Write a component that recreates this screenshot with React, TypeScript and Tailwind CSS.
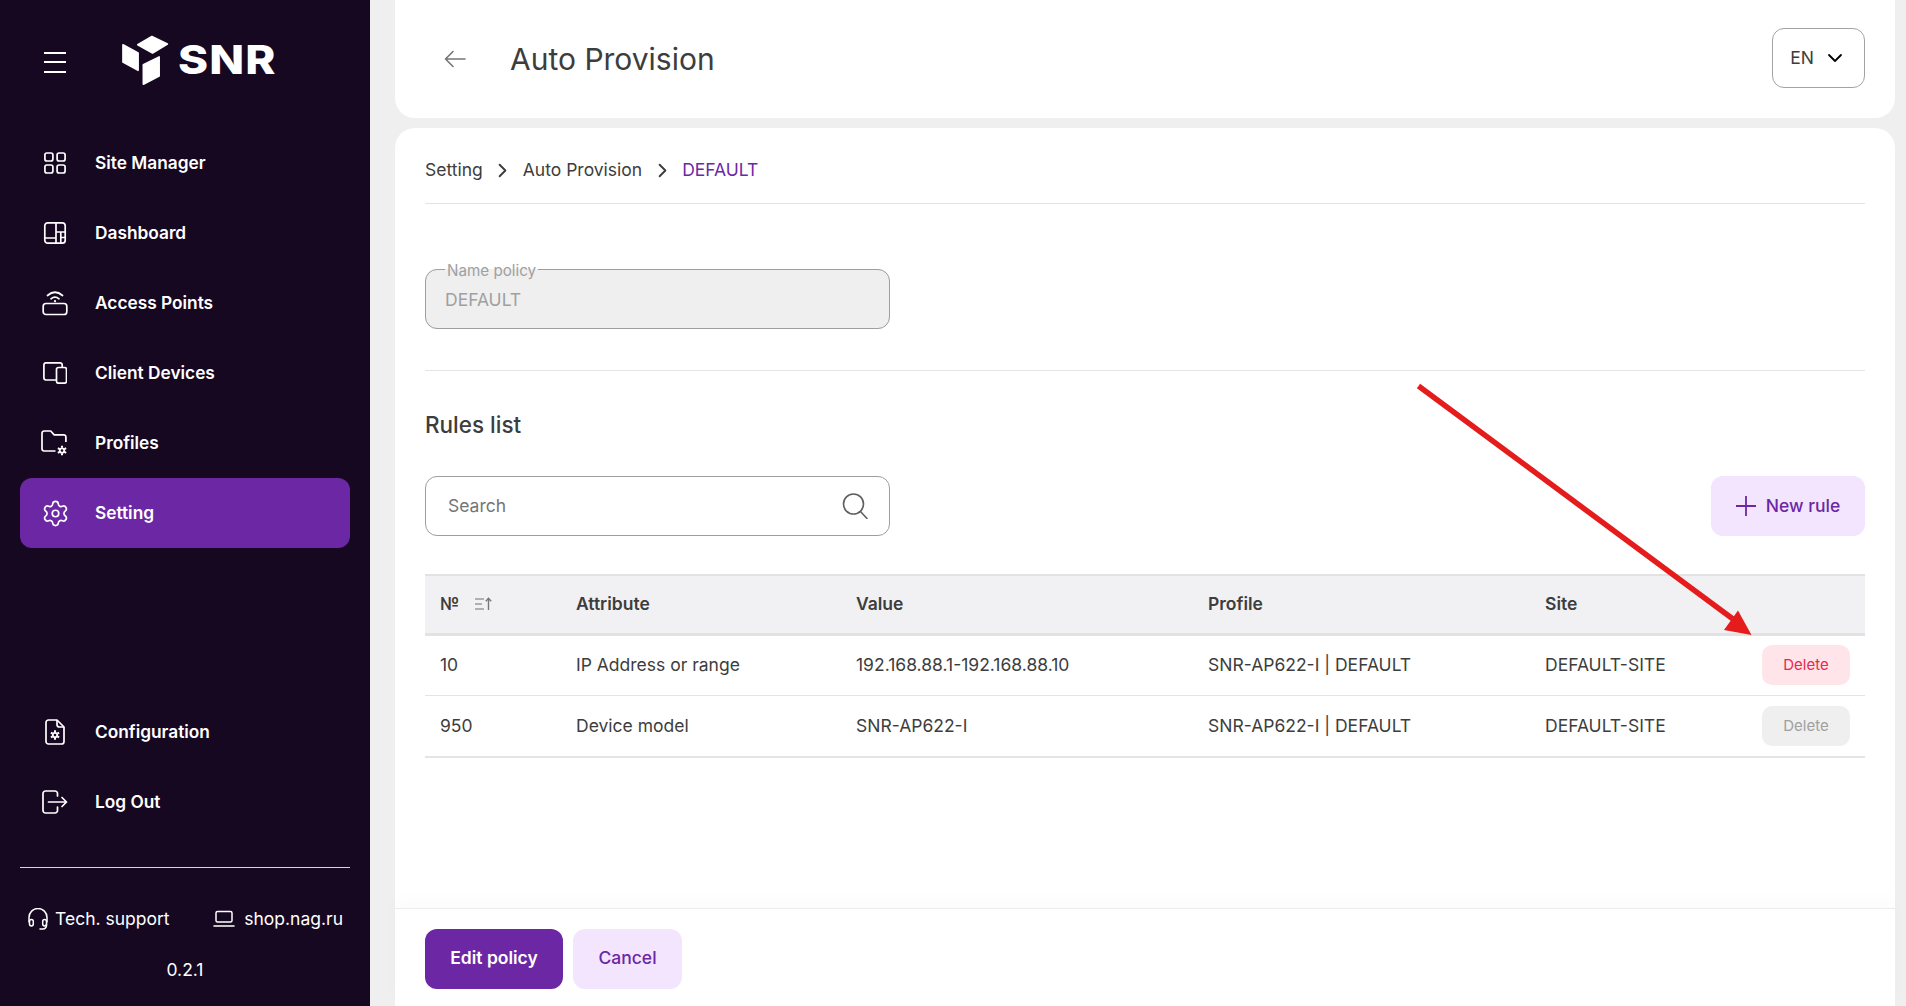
import { ChevronDown, ChevronRight } from 'lucide-react';
import type { ReactNode } from 'react';

const SiteManagerIcon = () => (
  <svg width="24" height="24" viewBox="0 0 24 24" fill="none" stroke="white" strokeWidth="1.7">
    <rect x="1.9" y="2" width="8" height="8" rx="2" />
    <rect x="14.1" y="2" width="8" height="8" rx="2" />
    <rect x="1.9" y="14" width="8" height="8" rx="2" />
    <rect x="14.1" y="14" width="8" height="8" rx="2" />
  </svg>
);

const DashboardIcon = () => (
  <svg width="24" height="24" viewBox="0 0 24 24" fill="none" stroke="white" strokeWidth="1.7" strokeLinejoin="round">
    <rect x="1.8" y="1.8" width="20.4" height="20.4" rx="3" />
    <path d="M13 2v20M2 17h11M13 11h9M17.8 11v11M17.8 16.5h4.4" />
  </svg>
);

const AccessPointIcon = () => (
  <svg width="26" height="26" viewBox="0 0 26 26" fill="none" stroke="white" strokeWidth="1.7" strokeLinecap="round">
    <rect x="1.2" y="13.5" width="23.6" height="11" rx="2.8" />
    <path d="M5.5 5.5Q13-1 20.5 5.5M9 8.8Q13 5.6 17 8.8" />
    <path d="M13 11v.2" strokeWidth="2.2" />
  </svg>
);

const ClientDevicesIcon = () => (
  <svg width="24" height="22" viewBox="0 0 24 22" fill="none" stroke="white" strokeWidth="1.7" strokeLinejoin="round">
    <path d="M13.5 18H3A2.2 2.2 0 0 1 .9 15.8V3A2.2 2.2 0 0 1 3 .9h14A2.2 2.2 0 0 1 19.2 3v2.5" />
    <rect x="13.5" y="5.5" width="10" height="15.7" rx="2" />
  </svg>
);

const SmallGear = ({ x, y }: { x: number; y: number }) => (
  <g transform={`translate(${x} ${y})`} fill="none" stroke="white">
    <circle r="2.2" strokeWidth="1.8" />
    <path d="M0-4.7v2M0 2.7v2M-4.1-2.35l1.7 1M2.4 1.35l1.7 1M-4.1 2.35l1.7-1M2.4-1.35l1.7-1" strokeWidth="2" />
  </g>
);

const ProfilesIcon = () => (
  <svg width="28" height="26" viewBox="0 0 28 26" fill="none" stroke="white" strokeWidth="1.7" strokeLinejoin="round">
    <path d="M14.5 21H3.2A2.2 2.2 0 0 1 1 18.8V3.2A2.2 2.2 0 0 1 3.2 1h6.5l3.5 3.8h9.5a2.2 2.2 0 0 1 2.2 2.2v5" />
    <SmallGear x={21} y={20.5} />
  </svg>
);

const ConfigurationIcon = () => (
  <svg width="20" height="26" viewBox="0 0 20 26" fill="none" stroke="white" strokeWidth="1.7" strokeLinejoin="round">
    <path d="M3.5 1H12l7 7v14.5a2.5 2.5 0 0 1-2.5 2.5h-13A2.5 2.5 0 0 1 1 22.5v-19A2.5 2.5 0 0 1 3.5 1z" />
    <path d="M12 1v4.5A2.5 2.5 0 0 0 14.5 8H19" />
    <SmallGear x={10} y={16} />
  </svg>
);

const LogOutIcon = () => (
  <svg width="26" height="24" viewBox="0 0 26 24" fill="none" stroke="white" strokeWidth="1.7" strokeLinecap="round" strokeLinejoin="round">
    <path d="M15.5 6V3.5A2.5 2.5 0 0 0 13 1H3.5A2.5 2.5 0 0 0 1 3.5v17A2.5 2.5 0 0 0 3.5 23H13a2.5 2.5 0 0 0 2.5-2.5V17" />
    <path d="M6.5 12h18M20 7.5l4.5 4.5-4.5 4.5" />
  </svg>
);

const HeadsetIcon = () => (
  <svg width="20" height="22" viewBox="0 0 20 22" fill="none" stroke="white" strokeWidth="1.5" strokeLinecap="round">
    <path d="M1 14V9.5a9 9 0 0 1 18 0V14" />
    <rect x="1.5" y="11.5" width="3.8" height="6.5" rx="1.9" />
    <rect x="14.7" y="11.5" width="3.8" height="6.5" rx="1.9" />
    <path d="M18.5 16v1.5a3.5 3.5 0 0 1-3.5 3.5H12" />
  </svg>
);

const LaptopIcon = () => (
  <svg width="22" height="18" viewBox="0 0 22 18" fill="none" stroke="white" strokeWidth="1.5" strokeLinecap="round" strokeLinejoin="round">
    <rect x="3" y="1.5" width="16" height="10.5" rx="1.5" />
    <path d="M1 16h20" />
  </svg>
);

const SettingIcon = () => (
  <svg className="shrink-0" width="29" height="29" viewBox="0 0 24 24" fill="none" stroke="white" strokeWidth="1.4" strokeLinecap="round" strokeLinejoin="round">
    <path d="M9.671 4.136a2.34 2.34 0 0 1 4.659 0 2.34 2.34 0 0 0 3.319 1.915 2.34 2.34 0 0 1 2.33 4.033 2.34 2.34 0 0 0 0 3.831 2.34 2.34 0 0 1-2.33 4.033 2.34 2.34 0 0 0-3.319 1.915 2.34 2.34 0 0 1-4.659 0 2.34 2.34 0 0 0-3.32-1.915 2.34 2.34 0 0 1-2.33-4.033 2.34 2.34 0 0 0 0-3.831A2.34 2.34 0 0 1 6.351 6.051a2.34 2.34 0 0 0 3.32-1.915" />
    <circle cx="12" cy="12" r="2.7" />
  </svg>
);

const SortIcon = () => (
  <svg width="17" height="14" viewBox="0 0 17 14" fill="none" stroke="#9a9a9a" strokeWidth="1.4">
    <path d="M0 2h9M0 7h7M0 12h9" />
    <path d="M13.5 13V1.5M10.8 4.2l2.7-2.9 2.7 2.9" stroke="#777" />
  </svg>
);

const BackIcon = () => (
  <svg width="22" height="18" viewBox="0 0 22 18" fill="none" stroke="#757575" strokeWidth="1.6" strokeLinecap="round" strokeLinejoin="round">
    <path d="M21 9H1.5M9 1.5L1.5 9 9 16.5" />
  </svg>
);

const SearchIcon = () => (
  <svg width="26" height="26" viewBox="0 0 26 26" fill="none" stroke="#5f5f5f" strokeWidth="1.6" strokeLinecap="round">
    <circle cx="11.5" cy="11" r="10" />
    <path d="M18.5 18.5L25 25.5" />
  </svg>
);

const PlusIcon = () => (
  <svg width="20" height="20" viewBox="0 0 20 20" fill="none" stroke="currentColor" strokeWidth="1.8">
    <path d="M10 0v20M0 10h20" />
  </svg>
);

const Logo = () => (
  <div className="-mt-[3px] ml-[55px] flex items-center">
    <svg width="48" height="51" viewBox="64 46 146 154" fill="white" stroke="white" strokeWidth="5" strokeLinejoin="round">
      <polygon points="70,75 116,100 116,153 70,128" />
      <polygon points="132,136 180,112 180,170 132,195" />
      <polygon points="115,75 158,50 205,73 160,100" />
    </svg>
    <span className="-mt-[2px] ml-[9px] origin-left scale-x-[1.14] text-[40px] leading-none font-extrabold tracking-[1px] text-white">
      SNR
    </span>
  </div>
);

function NavItem({ icon, label, active }: { icon: ReactNode; label: string; active?: boolean }) {
  return (
    <div className={`mx-5 flex h-[70px] items-center rounded-[12px] ${active ? 'bg-[#6c27a5]' : ''}`}>
      <div className="flex w-[75px] justify-start pl-[21px]">
        <div className="flex w-[28px] justify-center">{icon}</div>
      </div>
      <span className="text-[17.3px] font-semibold text-white">{label}</span>
    </div>
  );
}

const Sidebar = () => (
  <aside className="flex h-full w-[370px] shrink-0 flex-col bg-[#170822]">
    <div className="flex h-[128px] items-center pb-[4px] pl-[44px]">
      <div className="flex w-[22px] flex-col gap-[7.5px]">
        <div className="h-[2px] bg-white" />
        <div className="h-[2px] bg-white" />
        <div className="h-[2px] bg-white" />
      </div>
      <Logo />
    </div>
    <nav>
      <NavItem icon={<SiteManagerIcon />} label="Site Manager" />
      <NavItem icon={<DashboardIcon />} label="Dashboard" />
      <NavItem icon={<AccessPointIcon />} label="Access Points" />
      <NavItem icon={<ClientDevicesIcon />} label="Client Devices" />
      <NavItem icon={<ProfilesIcon />} label="Profiles" />
      <NavItem icon={<SettingIcon />} label="Setting" active />
    </nav>
    <div className="mt-auto">
      <NavItem icon={<ConfigurationIcon />} label="Configuration" />
      <NavItem icon={<LogOutIcon />} label="Log Out" />
    </div>
    <div className="mx-5 mt-[30px] border-t border-[#d9d3dd]" />
    <div className="mx-5 mt-[39px] flex items-center justify-between pr-[7px] pl-[8px] text-[17.5px] leading-6 text-white">
      <span className="flex items-center gap-[7px]">
        <HeadsetIcon /> Tech. support
      </span>
      <span className="flex items-center gap-[9px]">
        <LaptopIcon /> shop.nag.ru
      </span>
    </div>
    <div className="mt-[27px] mb-[24.5px] text-center text-[17.5px] leading-6 text-white">0.2.1</div>
  </aside>
);

const Header = () => (
  <header className="flex h-[118px] shrink-0 items-center rounded-b-[20px] bg-white pr-[30px] pl-[49px]">
    <BackIcon />
    <h1 className="ml-[44px] text-[30px] text-[#3d3d3d]">Auto Provision</h1>
    <button className="-mt-[2px] ml-auto flex h-[60px] w-[93px] items-center justify-center gap-[9px] rounded-[12px] border border-[#a3a3a3] text-[17.5px] text-[#3d3d3d]">
      EN <ChevronDown className="h-[24px] w-[24px] text-black" strokeWidth={1.8} />
    </button>
  </header>
);

const Breadcrumb = () => (
  <div className="flex h-[76px] items-center border-b border-[#e4e4e4] pt-[10px] text-[17.5px] text-[#3d3d3d]">
    <span>Setting</span>
    <ChevronRight className="mx-[8.5px] h-[23px] w-[23px]" strokeWidth={2} />
    <span>Auto Provision</span>
    <ChevronRight className="mx-[8.5px] h-[23px] w-[23px]" strokeWidth={2} />
    <span className="text-[#6c27a5]">DEFAULT</span>
  </div>
);

const NamePolicy = () => (
  <fieldset className="mt-[55px] h-[70px] w-[465px] rounded-[12px] border border-[#9e9e9e] bg-[#efefef] px-[19px]">
    <legend className="relative top-[1.5px] px-[2px] text-[15.2px] leading-5 text-[#a0a0a0]">Name policy</legend>
    <div className="pt-[7.5px] text-[17.5px] text-[#a0a0a0]">DEFAULT</div>
  </fieldset>
);

const rows = [
  { no: '10', attribute: 'IP Address or range', value: '192.168.88.1-192.168.88.10', profile: 'SNR-AP622-I | DEFAULT', site: 'DEFAULT-SITE', deletable: true },
  { no: '950', attribute: 'Device model', value: 'SNR-AP622-I', profile: 'SNR-AP622-I | DEFAULT', site: 'DEFAULT-SITE', deletable: false },
];

const RulesTable = () => (
  <table className="mt-[38px] w-full table-fixed border-collapse text-[17.5px] text-[#3d3d3d]">
    <thead>
      <tr className="h-[59px] border-t-2 border-b-[3px] border-[#e2e2e2] bg-[#f1f1f3] text-left">
        <th className="w-[136px] pl-[15px] font-semibold">
          <span className="flex items-center gap-[16px]">
            № <SortIcon />
          </span>
        </th>
        <th className="w-[280px] pl-[15px] font-semibold">Attribute</th>
        <th className="w-[351px] pl-[15px] font-semibold">Value</th>
        <th className="w-[337px] pl-[16px] font-semibold">Profile</th>
        <th className="w-[233px] pl-[16px] font-semibold">Site</th>
        <th />
      </tr>
    </thead>
    <tbody>
      {rows.map((row, i) => (
        <tr key={row.no} className={`h-[61.5px] border-[#e4e4e4] ${i === 1 ? 'border-b-2' : 'border-b'}`}>
          <td className="pl-[15px]">{row.no}</td>
          <td className="pl-[15px]">{row.attribute}</td>
          <td className="pl-[15px]">{row.value}</td>
          <td className="pl-[16px]">{row.profile}</td>
          <td className="pl-[16px]">{row.site}</td>
          <td className="pr-[15px] text-right">
            <button
              className={`h-[40px] w-[88px] rounded-[10px] text-[15px] ${
                row.deletable ? 'bg-[#ffe4e9] text-[#e8274f]' : 'bg-[#efefef] text-[#a0a0a0]'
              }`}
            >
              Delete
            </button>
          </td>
        </tr>
      ))}
    </tbody>
  </table>
);

const RedArrow = () => (
  <svg className="pointer-events-none absolute top-0 left-0" width="1906" height="1006" fill="none">
    <path d="M1418.5 386L1737 622" stroke="#e51c1c" strokeWidth="5.5" />
    <polygon points="1751.5,635 1724,630 1738,610.5" fill="#e51c1c" />
  </svg>
);

export default function App() {
  return (
    <div className="relative flex h-screen w-full overflow-hidden bg-[#efefef] font-['Inter',sans-serif]">
      <Sidebar />
      <main className="flex min-w-0 flex-1 flex-col gap-[10px] pr-[11px] pl-[25px]">
        <Header />
        <section className="flex min-h-0 flex-1 flex-col rounded-t-[20px] bg-white">
          <div className="flex-1 px-[30px]">
            <Breadcrumb />
            <NamePolicy />
            <div className="mt-[41px] border-t border-[#e4e4e4]" />
            <h2 className="mt-[39px] text-[22.5px] leading-[30px] font-medium text-[#3d3d3d]">Rules list</h2>
            <div className="mt-[36px] flex items-center justify-between">
              <div className="flex h-[60px] w-[465px] items-center rounded-[12px] border border-[#9e9e9e] pr-[21px] pl-[22px]">
                <span className="flex-1 text-[17.5px] text-[#757575]">Search</span>
                <SearchIcon />
              </div>
              <button className="flex h-[60px] w-[154px] items-center justify-center gap-[10px] rounded-[12px] bg-[#f2e5fd] text-[17.5px] font-medium text-[#6c27a5]">
                <PlusIcon /> New rule
              </button>
            </div>
            <RulesTable />
          </div>
          <footer className="flex h-[98px] shrink-0 items-center gap-[10px] border-t border-[#ececec] px-[30px] pt-[2px] shadow-[0_-8px_16px_rgba(0,0,0,0.02)]">
            <button className="h-[60px] w-[138px] rounded-[12px] bg-[#6c27a5] text-[17.5px] font-semibold text-white">Edit policy</button>
            <button className="h-[60px] w-[109px] rounded-[12px] bg-[#f2e5fd] text-[17.5px] font-medium text-[#6c27a5]">Cancel</button>
          </footer>
        </section>
      </main>
      <RedArrow />
    </div>
  );
}
